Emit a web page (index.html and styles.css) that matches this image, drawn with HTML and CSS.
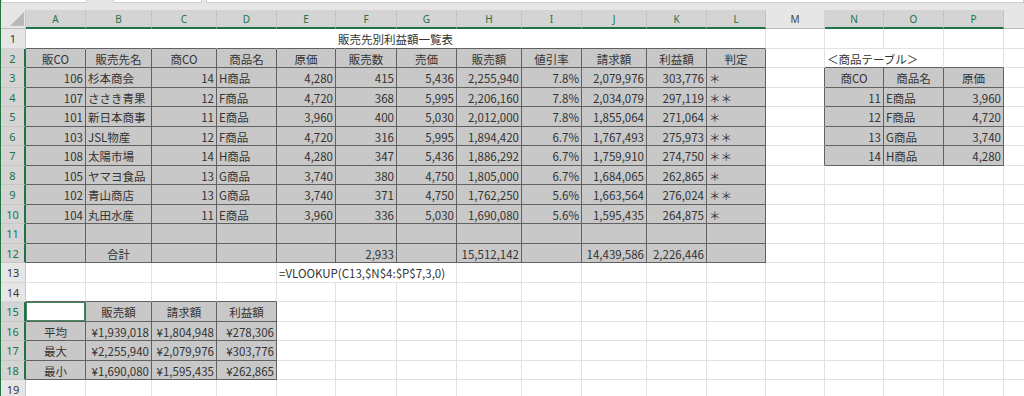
FILE: index.html
```html
<!DOCTYPE html>
<html lang="ja">
<head>
<meta charset="utf-8">
<title>販売先別利益額一覧表</title>
<link rel="stylesheet" href="styles.css">
</head>
<body>
<div class="app">
  <div class="topbar">
    <div class="box namebox"></div>
    <div class="box fxbtns"></div>
    <div class="box fx"></div>
  </div>
  <div class="sheet">
    <div class="corner"></div>
    <div class="ch sel">A</div><div class="ch sel">B</div><div class="ch sel">C</div><div class="ch sel">D</div><div class="ch sel">E</div><div class="ch sel">F</div><div class="ch sel">G</div><div class="ch sel">H</div><div class="ch sel">I</div><div class="ch sel">J</div><div class="ch sel">K</div><div class="ch sel">L</div><div class="ch">M</div><div class="ch sel">N</div><div class="ch sel">O</div><div class="ch sel">P</div><div class="ch"></div>

    <div class="rh">1</div>
    <div class="nb bb"></div><div class="nb bb"></div><div class="nb bb"></div><div class="nb bb"></div><div class="nb bb"></div>
    <div class="bb span7">販売先別利益額一覧表</div>
    <div></div><div></div><div></div><div></div><div></div>

    <div class="rh sel">2</div>
    <div class="g m">販CO</div><div class="g m">販売先名</div><div class="g m">商CO</div><div class="g m">商品名</div><div class="g m">原価</div><div class="g m">販売数</div><div class="g m">売価</div><div class="g m">販売額</div><div class="g m">値引率</div><div class="g m">請求額</div><div class="g m">利益額</div><div class="g m">判定</div>
    <div></div><div class="bb span2 lead">＜商品テーブル＞</div><div class="bb"></div><div></div>

    <div class="rh sel">3</div>
    <div class="g r">106</div><div class="g">杉本商会</div><div class="g r">14</div><div class="g">H商品</div><div class="g r">4,280</div><div class="g r">415</div><div class="g r">5,436</div><div class="g r">2,255,940</div><div class="g r">7.8%</div><div class="g r">2,079,976</div><div class="g r">303,776</div><div class="g">＊</div>
    <div class="br"></div><div class="g m">商CO</div><div class="g m">商品名</div><div class="g m">原価</div><div></div>

    <div class="rh sel">4</div>
    <div class="g r">107</div><div class="g">ささき青果</div><div class="g r">12</div><div class="g">F商品</div><div class="g r">4,720</div><div class="g r">368</div><div class="g r">5,995</div><div class="g r">2,206,160</div><div class="g r">7.8%</div><div class="g r">2,034,079</div><div class="g r">297,119</div><div class="g">＊＊</div>
    <div class="br"></div><div class="g r">11</div><div class="g">E商品</div><div class="g r">3,960</div><div></div>

    <div class="rh sel">5</div>
    <div class="g r">101</div><div class="g">新日本商事</div><div class="g r">11</div><div class="g">E商品</div><div class="g r">3,960</div><div class="g r">400</div><div class="g r">5,030</div><div class="g r">2,012,000</div><div class="g r">7.8%</div><div class="g r">1,855,064</div><div class="g r">271,064</div><div class="g">＊</div>
    <div class="br"></div><div class="g r">12</div><div class="g">F商品</div><div class="g r">4,720</div><div></div>

    <div class="rh sel">6</div>
    <div class="g r">103</div><div class="g">JSL物産</div><div class="g r">12</div><div class="g">F商品</div><div class="g r">4,720</div><div class="g r">316</div><div class="g r">5,995</div><div class="g r">1,894,420</div><div class="g r">6.7%</div><div class="g r">1,767,493</div><div class="g r">275,973</div><div class="g">＊＊</div>
    <div class="br"></div><div class="g r">13</div><div class="g">G商品</div><div class="g r">3,740</div><div></div>

    <div class="rh sel">7</div>
    <div class="g r">108</div><div class="g">太陽市場</div><div class="g r">14</div><div class="g">H商品</div><div class="g r">4,280</div><div class="g r">347</div><div class="g r">5,436</div><div class="g r">1,886,292</div><div class="g r">6.7%</div><div class="g r">1,759,910</div><div class="g r">274,750</div><div class="g">＊＊</div>
    <div class="br"></div><div class="g r">14</div><div class="g">H商品</div><div class="g r">4,280</div><div></div>

    <div class="rh sel">8</div>
    <div class="g r">105</div><div class="g">ヤマヨ食品</div><div class="g r">13</div><div class="g">G商品</div><div class="g r">3,740</div><div class="g r">380</div><div class="g r">4,750</div><div class="g r">1,805,000</div><div class="g r">6.7%</div><div class="g r">1,684,065</div><div class="g r">262,865</div><div class="g">＊</div>
    <div></div><div></div><div></div><div></div><div></div>

    <div class="rh sel">9</div>
    <div class="g r">102</div><div class="g">青山商店</div><div class="g r">13</div><div class="g">G商品</div><div class="g r">3,740</div><div class="g r">371</div><div class="g r">4,750</div><div class="g r">1,762,250</div><div class="g r">5.6%</div><div class="g r">1,663,564</div><div class="g r">276,024</div><div class="g">＊＊</div>
    <div></div><div></div><div></div><div></div><div></div>

    <div class="rh sel">10</div>
    <div class="g r">104</div><div class="g">丸田水産</div><div class="g r">11</div><div class="g">E商品</div><div class="g r">3,960</div><div class="g r">336</div><div class="g r">5,030</div><div class="g r">1,690,080</div><div class="g r">5.6%</div><div class="g r">1,595,435</div><div class="g r">264,875</div><div class="g">＊</div>
    <div></div><div></div><div></div><div></div><div></div>

    <div class="rh sel">11</div>
    <div class="g"></div><div class="g"></div><div class="g"></div><div class="g"></div><div class="g"></div><div class="g"></div><div class="g"></div><div class="g"></div><div class="g"></div><div class="g"></div><div class="g"></div><div class="g"></div>
    <div></div><div></div><div></div><div></div><div></div>

    <div class="rh sel">12</div>
    <div class="g"></div><div class="g m">合計</div><div class="g"></div><div class="g"></div><div class="g"></div><div class="g r">2,933</div><div class="g"></div><div class="g r">15,512,142</div><div class="g"></div><div class="g r">14,439,586</div><div class="g r">2,226,446</div><div class="g"></div>
    <div></div><div></div><div></div><div></div><div></div>

    <div class="rh">13</div>
    <div></div><div></div><div></div><div></div>
    <div class="span3">=VLOOKUP(C13,$N$4:$P$7,3,0)</div>
    <div></div><div></div><div></div><div></div><div></div><div></div><div></div><div></div><div></div><div></div>

    <div class="rh">14</div>
    <div class="bb"></div><div class="bb"></div><div class="bb"></div><div class="bb"></div>
    <div></div><div></div><div></div><div></div><div></div><div></div><div></div><div></div><div></div><div></div><div></div><div></div><div></div>

    <div class="rh sel">15</div>
    <div class="act"></div><div class="g m">販売額</div><div class="g m">請求額</div><div class="g m">利益額</div>
    <div></div><div></div><div></div><div></div><div></div><div></div><div></div><div></div><div></div><div></div><div></div><div></div><div></div>

    <div class="rh sel">16</div>
    <div class="g m">平均</div><div class="g r">¥1,939,018</div><div class="g r">¥1,804,948</div><div class="g r">¥278,306</div>
    <div></div><div></div><div></div><div></div><div></div><div></div><div></div><div></div><div></div><div></div><div></div><div></div><div></div>

    <div class="rh sel">17</div>
    <div class="g m">最大</div><div class="g r">¥2,255,940</div><div class="g r">¥2,079,976</div><div class="g r">¥303,776</div>
    <div></div><div></div><div></div><div></div><div></div><div></div><div></div><div></div><div></div><div></div><div></div><div></div><div></div>

    <div class="rh sel">18</div>
    <div class="g m">最小</div><div class="g r">¥1,690,080</div><div class="g r">¥1,595,435</div><div class="g r">¥262,865</div>
    <div></div><div></div><div></div><div></div><div></div><div></div><div></div><div></div><div></div><div></div><div></div><div></div><div></div>

    <div class="rh">19</div>
    <div></div><div></div><div></div><div></div><div></div><div></div><div></div><div></div><div></div><div></div><div></div><div></div><div></div><div></div><div></div><div></div><div></div>
  </div>
</div>
</body>
</html>
```
FILE: styles.css
```css
* { box-sizing: border-box; }

body {
  margin: 0;
  background: #fff;
  font-family: "Noto Sans CJK JP", "Noto Sans", sans-serif;
}

.app {
  width: 1024px;
  height: 396px;
  overflow: hidden;
  border-left: 1px solid #217346;
}

.topbar {
  height: 10px;
  background: #e6e6e6;
  display: flex;
}

.box {
  height: 3px;
  background: #fff;
  border: 1px solid #cdcdcd;
  border-top: 0;
}

.namebox { width: 86px; margin-right: 26px; }
.fxbtns { width: 89px; margin-right: 4px; }
.fx { flex: 1; }

.sheet {
  display: grid;
  grid-template-columns: 25px 60px 66px 65px 60px 59px 61px 60px 65px 60px 65px 60px 59px 59px 59px 60px 60px 40px;
  grid-template-rows: 19px repeat(9, 20px 19px) 20px;
  font-size: 11.5px;
  color: #333;
}

.sheet > div {
  display: flex;
  align-items: center;
  padding: 1px 2px 0;
  white-space: nowrap;
  border-right: 1px solid #e2e2e2;
  border-bottom: 1px solid #e2e2e2;
  background: #fff;
}

.sheet > .corner {
  position: relative;
  background: #e6e6e6;
  border-right: 1px solid #c8c8c8;
  border-bottom: 1px solid #bdbdbd;
}

.corner::after {
  content: "";
  position: absolute;
  right: 1px;
  bottom: 2px;
  width: 14px;
  height: 14px;
  background: #b9b9b9;
  clip-path: polygon(100% 0, 100% 100%, 0 100%);
}

.sheet > .ch {
  justify-content: center;
  padding: 0;
  font-family: "Noto Sans", sans-serif;
  font-size: 10px;
  color: #444;
  background: #e6e6e6;
  border-right: 1px solid #d2d2d2;
  border-bottom: 1px solid #bdbdbd;
}

.sheet > .ch.sel {
  background: #d4d4d4;
  color: #217346;
  border-right-color: #c4c4c4;
  border-bottom: 2px solid #217346;
}

.sheet > .rh {
  justify-content: center;
  padding: 0;
  font-family: "Noto Sans", sans-serif;
  font-size: 11px;
  color: #333;
  background: #e6e6e6;
  border-right: 1px solid #c6c6c6;
  border-bottom: 1px solid #d6d6d6;
}

.sheet > .rh.sel {
  background: #d4d4d4;
  color: #217346;
  border-right: 2px solid #217346;
  border-bottom-color: #c6c6c6;
}

.sheet > .g {
  background: #c8c8c8;
  border-right-color: #616161;
  border-bottom-color: #616161;
}

.sheet > .r { justify-content: flex-end; }
.sheet > .m { justify-content: center; }

.sheet > .bb { border-bottom-color: #616161; }
.sheet > .br { border-right-color: #616161; }
.sheet > .nb { border-right-color: #fff; }

.sheet > .act {
  background: #fff;
  border-right-color: #616161;
  border-bottom-color: #616161;
  box-shadow: inset 0 0 0 1px #3f8a5c;
}

.span7 { grid-column: span 7; }
.span3 { grid-column: span 3; }
.span2 { grid-column: span 2; }
```
